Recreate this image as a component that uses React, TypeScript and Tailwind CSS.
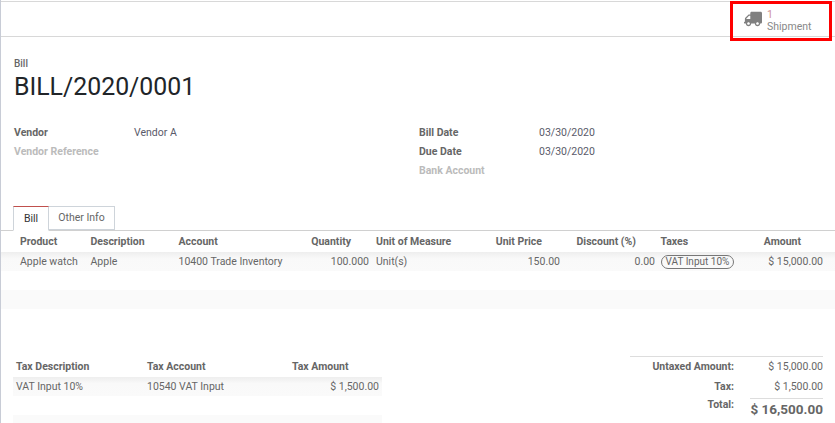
import React from "react";
import { FaTruck } from "react-icons/fa";

const Field = ({ label, value, muted }: { label: string; value?: string; muted?: boolean }) => (
  <div className="flex h-[19px] items-center">
    <span className={`w-[120px] font-bold ${muted ? "text-[#bbbbbb]" : "text-[#666666]"}`}>{label}</span>
    <span className="text-[#5a5a6a]">{value}</span>
  </div>
);

const lineCols = "grid grid-cols-[70.5px_88px_120.5px_71px_6px_114px_71px_95px_4.5px_99.5px_1fr]";
const taxCols = "grid grid-cols-[131px_145px_1fr]";

const TotalRow = ({ label, value, height }: { label: string; value: string; height: string }) => (
  <div className={`flex ${height} items-center justify-end`}>
    <b>{label}</b>
    <span className="w-[89px] text-right">{value}</span>
  </div>
);

export default function App() {
  return (
    <div className="relative h-[423px] w-[835px] overflow-hidden border-l border-[#c8ccd6] bg-white pt-[1px] font-['Roboto',sans-serif] text-[10.5px] text-[#666666]">
      <div className="flex h-[36px] justify-end border-y border-[#d8d8d8]">
        <div className="flex w-[104px] items-center gap-[5px] pl-[13px] text-[#888888]">
          <FaTruck className="h-[18px] w-[18px] -scale-x-100 text-[#808080]" />
          <div className="pt-[4px] leading-[12px]">
            <div className="text-[#cf8f95]">1</div>
            <div>Shipment</div>
          </div>
        </div>
      </div>
      {/* red annotation box */}
      <div className="absolute left-[729px] top-[1px] h-[40px] w-[102px] border-[3px] border-[#ff0000]" />

      <div className="pl-[13px] pt-[21px]">
        <div className="text-[10px] font-medium leading-[12px]">Bill</div>
        <div className="mt-[2px] text-[24.85px] leading-[30px] text-[#212529]">BILL/2020/0001</div>
      </div>
      <div className="mt-[21px] flex pl-[13px]">
        <div className="w-[405px]">
          <Field label="Vendor" value="Vendor A" />
          <Field label="Vendor Reference" muted />
        </div>
        <div>
          <Field label="Bill Date" value="03/30/2020" />
          <Field label="Due Date" value="03/30/2020" />
          <Field label="Bank Account" muted />
        </div>
      </div>

      <div className="mt-[26px] flex h-[25px] border-b border-[#d0d0d0] pl-[12px]">
        <div className="flex h-[25px] w-[36px] items-center justify-center border border-[#ced4da] border-t-[#c0504d] border-b-white text-[#333333]">Bill</div>
        <div className="flex h-[24px] w-[66px] items-center justify-center border-y border-r border-[#ced4da]">Other Info</div>
      </div>
      <div className={`${lineCols} h-[21px] items-center pl-[19px] font-bold`}>
        <span>Product</span>
        <span>Description</span>
        <span>Account</span>
        <span className="pr-[19px] text-right">Quantity</span>
        <span />
        <span>Unit of Measure</span>
        <span className="pr-[19px] text-right">Unit Price</span>
        <span className="pr-[20px] text-right">Discount (%)</span>
        <span />
        <span>Taxes</span>
        <span className="pr-[34px] text-right">Amount</span>
      </div>
      <div className={`${lineCols} h-[19px] items-center bg-[linear-gradient(#eeeeee,#f9f9f9_35%,#fafafa)] pl-[19px]`}>
        <span>Apple watch</span>
        <span>Apple</span>
        <span>10400 Trade Inventory</span>
        <span className="pr-px text-right">100.000</span>
        <span />
        <span>Unit(s)</span>
        <span className="pr-px text-right">150.00</span>
        <span className="pr-px text-right">0.00</span>
        <span />
        <span>
          <span className="inline-block whitespace-nowrap rounded-[7px] border border-[#777777] px-[4px] text-[10px] leading-[12px]">VAT Input 10%</span>
        </span>
        <span className="pr-[12px] text-right">$ 15,000.00</span>
      </div>
      <div className="h-[19px]" />
      <div className="h-[19px] bg-[#fafafa]" />

      <div className="mt-[47px] flex justify-between">
        <div className="ml-[12px] w-[369px] pt-px">
          <div className={`${taxCols} h-[20px] items-center pl-[3px] font-bold`}>
            <span>Tax Description</span>
            <span>Tax Account</span>
            <span>Tax Amount</span>
          </div>
          <div className={`${taxCols} h-[19px] items-center bg-[linear-gradient(#eeeeee,#f9f9f9_35%,#fafafa)] pl-[3px] pr-[3px]`}>
            <span>VAT Input 10%</span>
            <span>10540 VAT Input</span>
            <span className="text-right">$ 1,500.00</span>
          </div>
          <div className="h-[19px]" />
          <div className="h-[19px] bg-[#fafafa]" />
        </div>
        <div className="mr-[12px] flex w-[193px] flex-col border-t border-[#dddddd]">
          <TotalRow label="Untaxed Amount:" value="$ 15,000.00" height="h-[20px]" />
          <TotalRow label="Tax:" value="$ 1,500.00" height="h-[19px]" />
          <div className="mt-[2px] w-[73px] self-end border-t border-[#dddddd]" />
          <div className="flex items-start justify-end">
            <b className="leading-[12px]">Total:</b>
            <span className="w-[89px] text-right text-[13.5px] font-bold leading-[20px]">$ 16,500.00</span>
          </div>
        </div>
      </div>
    </div>
  );
}
